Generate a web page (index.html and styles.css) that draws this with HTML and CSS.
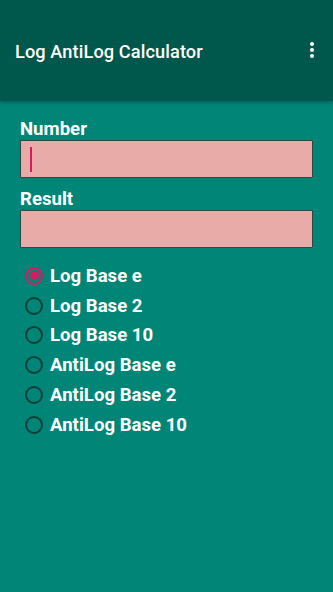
FILE: index.html
```html
<!DOCTYPE html>
<html>
<head>
<meta charset="utf-8">
<link rel="stylesheet" href="styles.css">
</head>
<body>
<header class="appbar">
  <h1 class="title">Log AntiLog Calculator</h1>
  <div class="menu"><span></span><span></span><span></span></div>
</header>
<main class="content">
  <label class="label">Number</label>
  <div class="field"><span class="cursor"></span></div>
  <label class="label label-2">Result</label>
  <div class="field"></div>
  <ul class="radios">
    <li class="radio checked"><span class="circle"></span>Log Base e</li>
    <li class="radio"><span class="circle"></span>Log Base 2</li>
    <li class="radio"><span class="circle"></span>Log Base 10</li>
    <li class="radio"><span class="circle"></span>AntiLog Base e</li>
    <li class="radio"><span class="circle"></span>AntiLog Base 2</li>
    <li class="radio"><span class="circle"></span>AntiLog Base 10</li>
  </ul>
</main>
</body>
</html>
```
FILE: styles.css
```css
* { box-sizing: border-box; }
html, body { margin: 0; padding: 0; }
body {
  width: 333px;
  height: 592px;
  background: #008577;
  font-family: Roboto, "Noto Sans", sans-serif;
  color: #ffffff;
  overflow: hidden;
}
.appbar {
  height: 101px;
  background: #00574B;
  display: flex;
  align-items: center;
  padding: 0 15px 0 15px;
  box-shadow: 0 1px 4px rgba(0,0,0,0.35);
  position: relative;
}
.title {
  margin: 0;
  flex: 1;
  font-size: 18.2px;
  font-weight: 500;
  letter-spacing: 0.1px;
  padding-top: 2px;
}
.menu {
  display: flex;
  flex-direction: column;
  gap: 1.6px;
  margin-right: 4px;
  margin-top: -1px;
}
.menu span {
  width: 4px;
  height: 4px;
  border-radius: 50%;
  background: #fff;
}
.content {
  padding: 17.5px 20px 0 20px;
  display: flex;
  flex-direction: column;
}
.label {
  font-size: 18.6px;
  font-weight: 700;
  line-height: 21px;
  margin-bottom: 0.5px;
}
.label-2 { margin-top: 10.5px; }
.field {
  height: 38px;
  background: #E9ABA7;
  border: 1px solid #2c4a44;
  border-radius: 1px;
  display: flex;
  align-items: center;
  padding-left: 9px;
}
.cursor {
  width: 2px;
  height: 25px;
  background: #D81B60;
}
.radios {
  list-style: none;
  margin: 13px 0 0 0;
  padding: 0;
  display: flex;
  flex-direction: column;
}
.radio {
  height: 29.8px;
  display: flex;
  align-items: center;
  font-size: 18.6px;
  font-weight: 700;
}
.circle {
  width: 18px;
  height: 18px;
  border: 2px solid #0b3f37;
  border-radius: 50%;
  margin: 0 7px 0 5px;
  display: flex;
  align-items: center;
  justify-content: center;
}
.checked .circle { border-color: #D81B60; }
.checked .circle::after {
  content: "";
  width: 9px;
  height: 9px;
  border-radius: 50%;
  background: #D81B60;
}
```
